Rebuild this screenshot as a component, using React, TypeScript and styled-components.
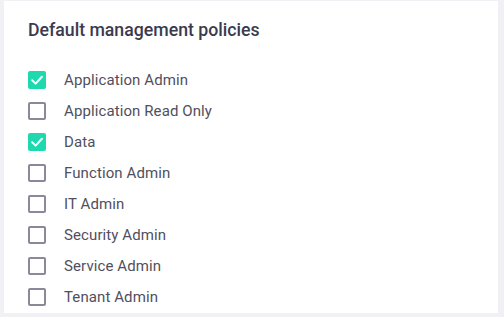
import React from "react";
import styled, { createGlobalStyle } from "styled-components";

const Global = createGlobalStyle`
  html, body {
    margin: 0;
    padding: 0;
    background: #f0f0f5;
    font-family: Roboto, "Liberation Sans", sans-serif;
  }
`;

const Page = styled.div`
  padding: 1px 6px 0 4px;
`;

const Card = styled.section`
  background: #ffffff;
  width: 494px;
  height: 312px;
  box-sizing: border-box;
  padding: 17px 24px 0 24px;
  overflow: hidden;
  display: flex;
  flex-direction: column;
`;

const Title = styled.h2`
  margin: 0;
  font-size: 17.7px;
  line-height: 24px;
  font-weight: 500;
  color: #3c3a4e;
`;

const List = styled.ul`
  list-style: none;
  margin: 22px 0 0 0;
  padding: 0;
  display: flex;
  flex-direction: column;
`;

const Row = styled.li`
  height: 31px;
  display: flex;
  align-items: center;
  gap: 18px;
`;

const Box = styled.span<{ $checked: boolean }>`
  width: 18px;
  height: 18px;
  box-sizing: border-box;
  border-radius: 2px;
  flex: none;
  display: flex;
  align-items: center;
  justify-content: center;
  background: ${(p) => (p.$checked ? "#1fd9ae" : "#ffffff")};
  border: ${(p) => (p.$checked ? "none" : "2px solid #8c889b")};
`;

const Label = styled.span`
  font-size: 15px;
  line-height: 20px;
  letter-spacing: 0.1px;
  color: #514f5d;
`;

const items: [string, boolean][] = [
  ["Application Admin", true],
  ["Application Read Only", false],
  ["Data", true],
  ["Function Admin", false],
  ["IT Admin", false],
  ["Security Admin", false],
  ["Service Admin", false],
  ["Tenant Admin", false],
];

export default function App() {
  return (
    <>
      <Global />
      <Page>
        <Card>
          <Title>Default management policies</Title>
          <List>
            {items.map(([name, checked]) => (
              <Row key={name}>
                <Box $checked={checked}>
                  {checked && (
                    <svg width="18" height="18" viewBox="0 0 18 18">
                      <path
                        d="M4.2 9.3 L7.6 12.6 L13.9 5.8"
                        fill="none"
                        stroke="#ffffff"
                        strokeWidth="2"
                        strokeLinecap="round"
                        strokeLinejoin="round"
                      />
                    </svg>
                  )}
                </Box>
                <Label>{name}</Label>
              </Row>
            ))}
          </List>
        </Card>
      </Page>
    </>
  );
}
